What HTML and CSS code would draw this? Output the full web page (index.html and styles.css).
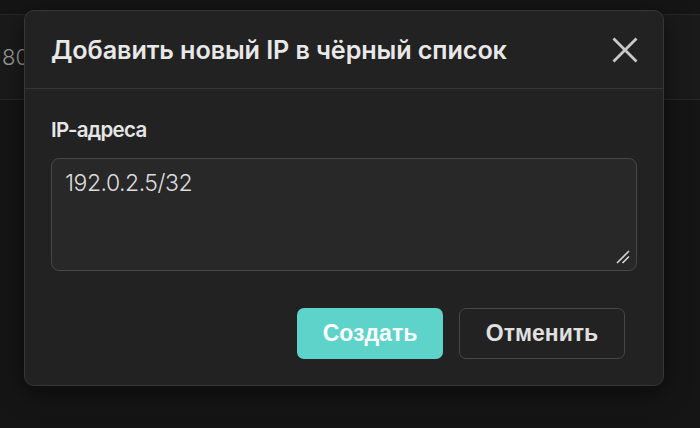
FILE: index.html
```html
<!DOCTYPE html>
<html lang="ru">
<head>
<meta charset="utf-8">
<title>Чёрный список</title>
<link rel="stylesheet" href="styles.css">
</head>
<body>
<div class="page">
  <div class="table">
    <div class="row"><span class="cell">80</span></div>
  </div>
  <div class="modal" role="dialog">
    <div class="modal-header">
      <h2 class="modal-title">Добавить новый IP в чёрный список</h2>
      <button class="close" aria-label="Закрыть">
        <svg width="26" height="26" viewBox="0 0 26 26"><path d="M1.5 1.5 L24.5 24.5 M24.5 1.5 L1.5 24.5" stroke="#c9c9c9" stroke-width="2.8" fill="none"/></svg>
      </button>
    </div>
    <div class="modal-body">
      <label class="label" for="ips">IP-адреса</label>
      <div class="field">
        <textarea id="ips" class="input">192.0.2.5/32</textarea>
        <svg class="resizer" width="14" height="14" viewBox="0 0 14 14"><path d="M1 13 L13 1 M6.5 13 L13 6.5" stroke="#d6d6d6" stroke-width="1.6" fill="none"/></svg>
      </div>
      <div class="actions">
        <button class="btn btn-primary">Создать</button>
        <button class="btn btn-secondary">Отменить</button>
      </div>
    </div>
  </div>
</div>
</body>
</html>
```
FILE: styles.css
```css
html, body {
  margin: 0;
  padding: 0;
  background: #141414;
}
.page {
  position: relative;
  width: 700px;
  height: 428px;
  overflow: hidden;
  background: #151515;
  font-family: Inter, "Noto Sans", sans-serif;
}
.table {
  padding-top: 14px;
}
.row {
  height: 84px;
  border-top: 1px solid #262626;
  border-bottom: 1px solid #262626;
  background: #1a1a1a;
  display: flex;
  align-items: center;
}
.cell {
  padding-left: 2px;
  color: #9a9a9a;
  font-size: 22px;
  font-weight: 300;
}
.modal {
  position: absolute;
  left: 24px;
  top: 10px;
  width: 638px;
  height: 374px;
  background: #222222;
  border: 1px solid #363636;
  border-radius: 10px;
  box-shadow: 0 6px 24px rgba(0,0,0,0.5);
  display: flex;
  flex-direction: column;
}
.modal-header {
  height: 77px;
  border-bottom: 1px solid #353535;
  display: flex;
  align-items: center;
  justify-content: space-between;
  padding: 0 25px 0 26px;
}
.modal-title {
  margin: 0;
  font-size: 25.2px;
  font-weight: 600;
  color: #e8e8e8;
  letter-spacing: -0.1px;
}
.close {
  background: none;
  border: 0;
  padding: 0;
  width: 26px;
  height: 26px;
  display: flex;
}
.modal-body {
  padding: 29px 26px 26px 26px;
  display: flex;
  flex-direction: column;
  flex: 1;
}
.label {
  font-size: 20.5px;
  font-weight: 600;
  color: #e6e6e6;
  line-height: 24px;
  letter-spacing: -0.7px;
}
.field {
  position: relative;
  margin-top: 16px;
  display: flex;
}
.input {
  flex: 1;
  height: 113px;
  box-sizing: border-box;
  background: #282828;
  border: 1px solid #474747;
  border-radius: 8px;
  padding: 10px 13px;
  color: #dcdcdc;
  font-family: Inter, "Noto Sans", sans-serif;
  font-size: 23px;
  font-weight: 300;
  letter-spacing: -0.5px;
  resize: none;
  outline: none;
}
.resizer {
  position: absolute;
  right: 7px;
  bottom: 7px;
}
.actions {
  margin-top: auto;
  display: flex;
  justify-content: flex-end;
  gap: 16px;
  padding-right: 12px;
}
.btn {
  height: 51px;
  border-radius: 7px;
  font-family: "Liberation Sans", Arial, sans-serif;
  font-weight: 700;
  font-size: 23px;
  cursor: pointer;
}
.btn-primary {
  width: 146px;
  background: #5ed3c9;
  border: 0;
  color: #ffffff;
}
.btn-secondary {
  width: 166px;
  background: transparent;
  border: 1px solid #474747;
  color: #e0e0e0;
}
```
